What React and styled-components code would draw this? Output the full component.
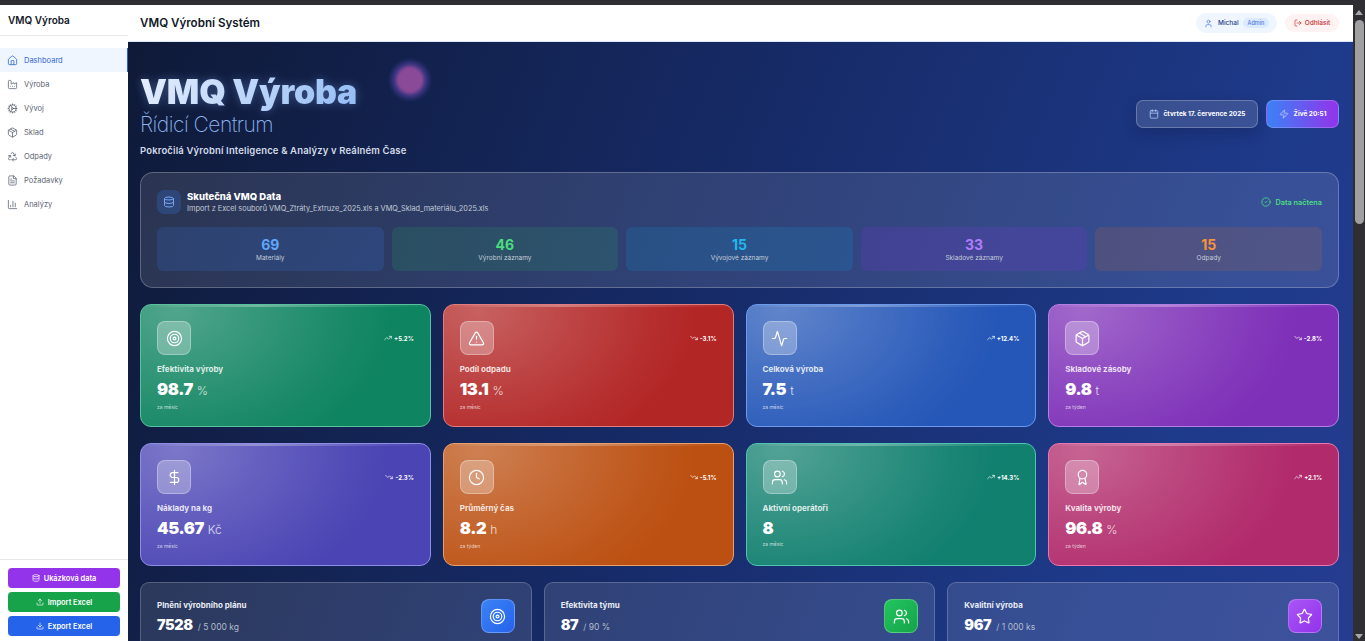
import React from "react";
import styled, { createGlobalStyle } from "styled-components";
import {
  Home, Factory, Cog, Package, Recycle, FileText, BarChart3, Database, Upload, Download,
  User, LogOut, Calendar, Zap, CircleCheck, Target, TriangleAlert, Activity, DollarSign,
  Clock, Users, Award, TrendingUp, TrendingDown, Star,
} from "lucide-react";

const Global = createGlobalStyle`
  html, body { margin: 0; padding: 0; height: 100%; overflow: hidden; }
  * { box-sizing: border-box; }
  body { font-family: Inter, "Noto Sans", sans-serif; background: #2f2f33; }
`;

const Page = styled.div`
  width: 1365px; height: 641px; display: flex; flex-direction: column; overflow: hidden;
`;
const TopStrip = styled.div` height: 5px; flex: none; background: #2f2f33; `;
const Body = styled.div` flex: 1; display: flex; min-height: 0; `;

const Sidebar = styled.aside`
  width: 128px; flex: none; background: #fff; display: flex; flex-direction: column;
`;
const Brand = styled.div`
  height: 31px; padding: 0 8px 1px; display: flex; align-items: center; flex: none;
  font-size: 10px; font-weight: 600; color: #111827; border-bottom: 1px solid #e5e7eb;
`;
const Nav = styled.nav` flex: 1; padding-top: 12px; display: flex; flex-direction: column; `;
const NavItem = styled.div`
  height: 24px; display: flex; align-items: center; gap: 6px; padding-left: 7px;
  font-size: 7.5px; color: ${(p) => (p.$active ? "#2f66d0" : "#5b6472")};
  background: ${(p) => (p.$active ? "#eff6ff" : "transparent")};
  border-right: ${(p) => (p.$active ? "1px solid #2563eb" : "none")};
`;
const SideActions = styled.div`
  flex: none; border-top: 1px solid #e5e7eb; padding: 8px 8px 5px;
  display: flex; flex-direction: column; gap: 4px;
`;
const ActionButton = styled.div`
  height: 20px; border-radius: 4px; background: ${(p) => p.$bg}; color: #fff;
  display: flex; align-items: center; justify-content: center; gap: 4px;
  font-size: 7.4px; font-weight: 600;
`;

const Column = styled.div` flex: 1; min-width: 0; display: flex; flex-direction: column; `;
const Header = styled.header`
  height: 37px; flex: none; background: #fff; border-bottom: 1px solid #dbe6f7;
  display: flex; align-items: center; justify-content: space-between; padding: 0 14px 0 12px;
`;
const HeaderTitle = styled.div` font-size: 11.6px; font-weight: 600; color: #111827; `;
const HeaderRight = styled.div` display: flex; align-items: center; gap: 8px; `;
const UserPill = styled.div`
  height: 20px; width: 81px; border-radius: 10px; background: #eff6ff; color: #1e3a8a;
  display: flex; align-items: center; padding-left: 8px; gap: 5px; font-size: 6.5px; font-weight: 500;
`;
const RoleTag = styled.span`
  background: #dbeafe; color: #4f7fdc; border-radius: 6px; padding: 2px 5px; font-size: 5.5px; margin-left: -1px;
`;
const LogoutPill = styled.div`
  height: 18px; width: 54px; border-radius: 9px; background: #fef2f2; color: #c53030;
  display: flex; align-items: center; justify-content: center; gap: 3px; font-size: 6.5px; font-weight: 500;
`;

const Main = styled.main`
  flex: 1; min-height: 0; overflow: hidden; padding: 30px 14px 0 12px; position: relative;
  background: linear-gradient(112deg, #0f1a38 0%, #162a66 45%, #1e3a8a 82%, #263c90 100%);
`;
const Orb = styled.div`
  position: absolute; left: 260px; top: 16px; width: 44px; height: 44px; border-radius: 50%;
  background: radial-gradient(circle at 50% 50%, #8b4a98 0 12px, rgba(84, 62, 150, .8) 15px, rgba(52, 52, 130, .5) 19px, transparent 22px);
  filter: blur(.8px);
`;
const Hero = styled.section`
  display: flex; align-items: center; justify-content: space-between; height: 86px; margin-bottom: 14px;
`;
const HeroText = styled.div` display: flex; flex-direction: column; margin-top: -2px; `;
const HeroTitle = styled.h1`
  margin: 0; font-size: 34px; font-weight: 900; line-height: 38px; letter-spacing: -.2px;
  background: linear-gradient(120deg, #e6effd 0%, #93bcf5 100%);
  -webkit-background-clip: text; background-clip: text; color: transparent;
  filter: drop-shadow(0 0 5px rgba(120, 165, 240, .4));
  width: max-content;
`;
const HeroSub = styled.div`
  font-size: 21px; font-weight: 200; line-height: 26px; color: #8db4ec; letter-spacing: -.5px; margin-top: 1px;
`;
const HeroTag = styled.div`
  font-size: 9.5px; font-weight: 600; color: #d3dbe8; margin-top: 7px; letter-spacing: .15px;
`;
const HeroRight = styled.div` display: flex; gap: 8px; margin-top: -2px; `;
const DateBadge = styled.div`
  width: 122px; height: 28px; border-radius: 7px; background: rgba(255,255,255,.13);
  border: 1px solid rgba(255,255,255,.24); color: #fff; box-shadow: 0 6px 14px rgba(10,20,60,.25);
  display: flex; align-items: center; justify-content: center; gap: 5px; font-size: 6.5px; font-weight: 700;
  & svg { color: #a5c4f5; }
`;
const LiveBadge = styled.div`
  width: 73px; height: 28px; border-radius: 7px; background: linear-gradient(90deg, #3b82f6, #9333ea);
  border: 1px solid rgba(255,255,255,.2); color: #fff;
  display: flex; align-items: center; justify-content: center; gap: 5px; font-size: 6.5px; font-weight: 700;
  & svg { color: #b8cdf8; }
`;

const DataPanel = styled.section`
  height: 116px; border-radius: 13px; padding: 17px 16px; margin-bottom: 16px;
  background: rgba(255,255,255,.115); border: 1px solid rgba(255,255,255,.24);
  display: flex; flex-direction: column; gap: 13px;
`;
const PanelHead = styled.div` display: flex; align-items: center; justify-content: space-between; `;
const PanelLeft = styled.div` display: flex; align-items: center; gap: 6px; `;
const PanelIcon = styled.div`
  width: 24px; height: 24px; border-radius: 7px; background: rgba(59,130,246,.22); color: #74a8f5;
  display: flex; align-items: center; justify-content: center;
`;
const PanelTitle = styled.div` font-size: 9.5px; font-weight: 800; color: #fff; line-height: 11px; `;
const PanelNote = styled.div` font-size: 7.35px; color: #c3cbd9; line-height: 10px; margin-top: 2px; `;
const PanelStatus = styled.div`
  display: flex; align-items: center; gap: 5px; font-size: 7.3px; font-weight: 600; color: #4ade80;
`;
const StatGrid = styled.div` display: grid; grid-template-columns: repeat(5, 1fr); gap: 8px; `;
const Stat = styled.div`
  height: 44px; border-radius: 6px; background: ${(p) => p.$bg};
  display: flex; flex-direction: column; align-items: center; justify-content: center;
`;
const StatValue = styled.div` font-size: 14px; font-weight: 700; line-height: 17px; color: ${(p) => p.$color}; `;
const StatLabel = styled.div` font-size: 6.5px; color: #c5cdd9; line-height: 9px; margin-top: 1px; `;

const KpiGrid = styled.div` display: grid; grid-template-columns: repeat(4, 1fr); gap: 16px 12px; margin-bottom: 16px; `;
const Kpi = styled.article`
  height: 123px; border-radius: 11px; padding: 16px; position: relative; overflow: hidden;
  border: 1px solid ${(p) => p.$edge};
  background:
    radial-gradient(ellipse 75% 130% at 12% 5%, rgba(255,255,255,.27) 0%, rgba(255,255,255,.15) 40%, rgba(255,255,255,.04) 80%, rgba(255,255,255,0) 100%),
    ${(p) => p.$bg};
  &::before {
    content: ""; position: absolute; left: 0; right: 0; top: 0; height: 2px;
    background: linear-gradient(90deg, transparent, rgba(255,255,255,.3) 40%, transparent);
  }
`;
const KpiTop = styled.div` display: flex; align-items: center; justify-content: space-between; margin-bottom: 9px; `;
const GlassIcon = styled.div`
  width: 34px; height: 34px; border-radius: 8px; color: #fff;
  background: rgba(255,255,255,.28); border: 1px solid rgba(255,255,255,.3);
  display: flex; align-items: center; justify-content: center;
`;
const Trend = styled.div`
  display: flex; align-items: center; gap: 2px; font-size: 6px; font-weight: 700; color: #fff;
`;
const KpiLabel = styled.div` font-size: 8px; font-weight: 700; line-height: 10px; color: rgba(255,255,255,.85); `;
const KpiValue = styled.div`
  font-size: 16.5px; font-weight: 900; color: #fff; line-height: 20px; margin-top: 5px; letter-spacing: -.4px;
  display: flex; align-items: baseline; gap: 4px;
`;
const KpiUnit = styled.span` font-size: 12px; font-weight: 300; color: rgba(255,255,255,.8); letter-spacing: 0; `;
const KpiNote = styled.div` font-size: 5px; line-height: 7px; color: rgba(255,255,255,.72); margin-top: 3px; `;

const PlanGrid = styled.div` display: grid; grid-template-columns: repeat(3, 1fr); gap: 12px; `;
const PlanCard = styled.article`
  height: 100px; border-radius: 9px; padding: 16px; display: flex; justify-content: space-between; align-items: flex-start;
  background: rgba(255,255,255,.115); border: 1px solid rgba(255,255,255,.2);
`;
const PlanLabel = styled.div` font-size: 8px; font-weight: 700; color: #e7ebf4; line-height: 12px; `;
const PlanValue = styled.div`
  font-size: 14.5px; font-weight: 900; color: #fff; line-height: 20px; margin-top: 4px; letter-spacing: -.4px;
  display: flex; align-items: baseline; gap: 5px;
`;
const PlanTarget = styled.span` font-size: 8.5px; font-weight: 400; color: #b4bccd; letter-spacing: 0; `;
const PlanIcon = styled.div`
  width: 34px; height: 34px; border-radius: 8px; color: #fff; background: ${(p) => p.$bg};
  border: 1px solid rgba(255,255,255,.25); display: flex; align-items: center; justify-content: center;
`;

const Scrollbar = styled.div`
  width: 12px; flex: none; background: #2f2f33; display: flex; flex-direction: column; align-items: center;
`;
const ArrowUp = styled.div`
  width: 0; height: 0; margin: 5px 0 5px; border-left: 4px solid transparent; border-right: 4px solid transparent;
  border-bottom: 5px solid #a8a8a8;
`;
const Thumb = styled.div` width: 9px; height: 204px; border-radius: 5px; background: #a0a0a0; `;
const ScrollSpacer = styled.div` flex: 1; `;
const ArrowDown = styled.div`
  width: 0; height: 0; margin-bottom: 2px; border-left: 4px solid transparent; border-right: 4px solid transparent;
  border-top: 5px solid #a8a8a8;
`;

const navItems = [
  ["Dashboard", Home], ["Výroba", Factory], ["Vývoj", Cog], ["Sklad", Package],
  ["Odpady", Recycle], ["Požadavky", FileText], ["Analýzy", BarChart3],
];
const stats = [
  [69, "Materiály", "#60a5fa", "rgba(59,130,246,.16)"],
  [46, "Výrobní záznamy", "#4ade80", "rgba(34,197,94,.14)"],
  [15, "Vývojové záznamy", "#22b8ee", "rgba(14,165,233,.16)"],
  [33, "Skladové záznamy", "#b07cf8", "rgba(147,51,234,.16)"],
  [15, "Odpady", "#fb923c", "rgba(249,115,22,.13)"],
];
const kpis = [
  ["Efektivita výroby", "98.7", "%", "za měsíc", "+5.2%", Target, "#0f8460", "#58c29c", true],
  ["Podíl odpadu", "13.1", "%", "za měsíc", "-3.1%", TriangleAlert, "#b32626", "#e37c7c", false],
  ["Celková výroba", "7.5", "t", "za měsíc", "+12.4%", Activity, "#2557b8", "#6b9bee", true],
  ["Skladové zásoby", "9.8", "t", "za týden", "-2.8%", Package, "#7e30b8", "#b77de6", false],
  ["Náklady na kg", "45.67", "Kč", "za měsíc", "-2.3%", DollarSign, "#4a44b4", "#8f8ee6", false],
  ["Průměrný čas", "8.2", "h", "za týden", "-5.1%", Clock, "#bc5012", "#e8a06c", false],
  ["Aktivní operátoři", "8", "", "za měsíc", "+14.3%", Users, "#11806f", "#4fc4b0", true],
  ["Kvalita výroby", "96.8", "%", "za týden", "+2.1%", Award, "#b12a6b", "#e878ae", true],
];
const plans = [
  ["Plnění výrobního plánu", "7528", "/ 5 000 kg", Target, "linear-gradient(135deg,#3b82f6,#2563eb)"],
  ["Efektivita týmu", "87", "/ 90 %", Users, "linear-gradient(135deg,#22c55e,#16a34a)"],
  ["Kvalitní výroba", "967", "/ 1 000 ks", Star, "linear-gradient(135deg,#a855f7,#9333ea)"],
];

export default function App() {
  return (
    <Page>
      <Global />
      <TopStrip />
      <Body>
        <Sidebar>
          <Brand>VMQ Výroba</Brand>
          <Nav>
            {navItems.map(([label, Icon], i) => (
              <NavItem key={label} $active={i === 0}>
                <Icon size={11} strokeWidth={1.7} />
                {label}
              </NavItem>
            ))}
          </Nav>
          <SideActions>
            <ActionButton $bg="#9333ea"><Database size={8} />Ukázková data</ActionButton>
            <ActionButton $bg="#16a34a"><Upload size={8} />Import Excel</ActionButton>
            <ActionButton $bg="#2563eb"><Download size={8} />Export Excel</ActionButton>
          </SideActions>
        </Sidebar>
        <Column>
          <Header>
            <HeaderTitle>VMQ Výrobní Systém</HeaderTitle>
            <HeaderRight>
              <UserPill><User size={9} color="#4f7fdc" />Michal<RoleTag>Admin</RoleTag></UserPill>
              <LogoutPill><LogOut size={8} />Odhlásit</LogoutPill>
            </HeaderRight>
          </Header>
          <Main>
            <Orb />
            <Hero>
              <HeroText>
                <HeroTitle>VMQ Výroba</HeroTitle>
                <HeroSub>Řídicí Centrum</HeroSub>
                <HeroTag>Pokročilá Výrobní Inteligence &amp; Analýzy v Reálném Čase</HeroTag>
              </HeroText>
              <HeroRight>
                <DateBadge><Calendar size={10} />čtvrtek 17. července 2025</DateBadge>
                <LiveBadge><Zap size={10} />Živě 20:51</LiveBadge>
              </HeroRight>
            </Hero>
            <DataPanel>
              <PanelHead>
                <PanelLeft>
                  <PanelIcon><Database size={12} /></PanelIcon>
                  <div>
                    <PanelTitle>Skutečná VMQ Data</PanelTitle>
                    <PanelNote>Import z Excel souborů VMQ_Ztráty_Extruze_2025.xls a VMQ_Sklad_materiálu_2025.xls</PanelNote>
                  </div>
                </PanelLeft>
                <PanelStatus><CircleCheck size={10} />Data načtena</PanelStatus>
              </PanelHead>
              <StatGrid>
                {stats.map(([value, label, color, bg]) => (
                  <Stat key={label} $bg={bg}>
                    <StatValue $color={color}>{value}</StatValue>
                    <StatLabel>{label}</StatLabel>
                  </Stat>
                ))}
              </StatGrid>
            </DataPanel>
            <KpiGrid>
              {kpis.map(([label, value, unit, note, trend, Icon, bg, edge, up]) => (
                <Kpi key={label} $bg={bg} $edge={edge}>
                  <KpiTop>
                    <GlassIcon><Icon size={17} strokeWidth={1.7} /></GlassIcon>
                    <Trend>
                      {up ? <TrendingUp size={8} /> : <TrendingDown size={8} />}
                      {trend}
                    </Trend>
                  </KpiTop>
                  <KpiLabel>{label}</KpiLabel>
                  <KpiValue>{value}{unit && <KpiUnit>{unit}</KpiUnit>}</KpiValue>
                  <KpiNote>{note}</KpiNote>
                </Kpi>
              ))}
            </KpiGrid>
            <PlanGrid>
              {plans.map(([label, value, target, Icon, bg]) => (
                <PlanCard key={label}>
                  <div>
                    <PlanLabel>{label}</PlanLabel>
                    <PlanValue>{value}<PlanTarget>{target}</PlanTarget></PlanValue>
                  </div>
                  <PlanIcon $bg={bg}><Icon size={17} strokeWidth={1.7} /></PlanIcon>
                </PlanCard>
              ))}
            </PlanGrid>
          </Main>
        </Column>
        <Scrollbar>
          <ArrowUp />
          <Thumb />
          <ScrollSpacer />
          <ArrowDown />
        </Scrollbar>
      </Body>
    </Page>
  );
}
